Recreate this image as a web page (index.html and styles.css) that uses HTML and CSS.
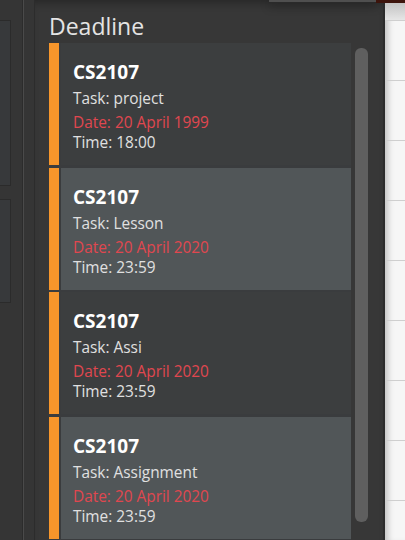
FILE: index.html
```html
<!DOCTYPE html>
<html>
<head>
<meta charset="utf-8">
<link rel="stylesheet" href="styles.css">
</head>
<body>
<div class="app">
  <div class="sidebar">
    <div class="sidebar-inner">
      <div class="box box-a"></div>
      <div class="box box-b"></div>
    </div>
    <div class="sidebar-gap"></div>
  </div>
  <div class="panel">
    <div class="panel-title">Deadline</div>
    <div class="list-wrap">
      <div class="list">
        <div class="card even">
          <div class="stripe"></div>
          <div class="card-body">
            <div class="card-title">CS2107</div>
            <div class="line task">Task: project</div>
            <div class="line date">Date: 20 April 1999</div>
            <div class="line">Time: 18:00</div>
          </div>
        </div>
        <div class="card odd">
          <div class="stripe"></div>
          <div class="card-body">
            <div class="card-title">CS2107</div>
            <div class="line task">Task: Lesson</div>
            <div class="line date">Date: 20 April 2020</div>
            <div class="line">Time: 23:59</div>
          </div>
        </div>
        <div class="card even">
          <div class="stripe"></div>
          <div class="card-body">
            <div class="card-title">CS2107</div>
            <div class="line task">Task: Assi</div>
            <div class="line date">Date: 20 April 2020</div>
            <div class="line">Time: 23:59</div>
          </div>
        </div>
        <div class="card odd">
          <div class="stripe"></div>
          <div class="card-body">
            <div class="card-title">CS2107</div>
            <div class="line task">Task: Assignment</div>
            <div class="line date">Date: 20 April 2020</div>
            <div class="line">Time: 23:59</div>
          </div>
        </div>
      </div>
      <div class="scrollbar"><div class="thumb"></div></div>
    </div>
  </div>
  <div class="divider"></div>
  <div class="calendar">
    <div class="cal-head"></div>
    <div class="cal-row"></div>
    <div class="cal-row"></div>
    <div class="cal-row"></div>
    <div class="cal-row"></div>
    <div class="cal-row"></div>
    <div class="cal-row"></div>
    <div class="cal-row"></div>
    <div class="cal-row"></div>
    <div class="cal-row"></div>
  </div>
  <div class="top-popup"></div>
  <div class="top-red"></div>
</div>
</body>
</html>
```

FILE: styles.css
```css
* { box-sizing: border-box; }
html, body {
  margin: 0;
  padding: 0;
  background: #363636;
}
.app {
  position: relative;
  display: flex;
  width: 405px;
  height: 540px;
  overflow: hidden;
  font-family: "Open Sans", "Noto Sans", sans-serif;
}
.sidebar {
  display: flex;
  width: 35px;
  flex: none;
  background: #353535;
}
.sidebar-inner {
  width: 23px;
  padding-top: 20px;
  border-right: 1px solid #2c2c2c;
}
.box {
  width: 11px;
  border: 1px solid #2b2b2b;
  border-left: none;
  background: #37393b;
}
.box-a { height: 166px; }
.box-b { height: 104px; margin-top: 13px; }
.sidebar-gap {
  width: 12px;
  border-left: 1px solid #4a4a4a;
  border-right: 1px solid #2c2c2c;
  background: #353535;
}
.panel {
  width: 348px;
  flex: none;
  background: #373737;
  padding-left: 14px;
  box-shadow: inset 0 8px 10px -6px rgba(0,0,0,0.35);
}
.panel-title {
  margin-top: 12px;
  height: 31px;
  line-height: 28px;
  font-size: 23px;
  color: #e4e4e4;
}
.list-wrap {
  display: flex;
}
.list {
  width: 302px;
  background: #3a3c3e;
}
.card {
  display: flex;
  height: 122px;
  margin-bottom: 2.7px;
}
.stripe {
  width: 10px;
  background: #f7962b;
}
.card-body {
  flex: 1;
  margin-left: 2px;
  padding: 17px 12px 0 12px;
}
.even .card-body { background: #3c3e3f; }
.odd .card-body { background: #515658; }
.card-title {
  font-size: 19px;
  font-weight: bold;
  line-height: 24px;
  color: #ffffff;
}
.line {
  font-size: 15.4px;
  line-height: 20px;
  color: #e0e0e0;
}
.task { margin-top: 5px; }
.date {
  margin-top: 4px;
  color: #e0474f;
}
.scrollbar {
  width: 32px;
  padding-left: 4px;
  padding-top: 5px;
}
.thumb {
  width: 13px;
  height: 474px;
  border-radius: 6px;
  background: #5f5f5f;
}
.divider {
  width: 2px;
  flex: none;
  background: #2c2c2c;
}
.calendar {
  flex: 1;
  background: #f6f6f6;
  box-shadow: inset 7px 0 6px -4px rgba(0,0,0,0.22);
}
.cal-head {
  height: 20px;
  background: linear-gradient(#bdbdbd, #e6e6e6);
}
.cal-row {
  height: 60px;
  border-top: 1px solid #cfcfcf;
}
.top-popup {
  position: absolute;
  left: 269px;
  top: 0;
  width: 107px;
  height: 3px;
  background: #4f4f4f;
  border-bottom: 1px solid #2a2a2a;
  box-shadow: 0 3px 10px rgba(0,0,0,0.45);
}
.top-red {
  position: absolute;
  left: 376px;
  top: 0;
  width: 29px;
  height: 3px;
  background: #3d140c;
}
```
